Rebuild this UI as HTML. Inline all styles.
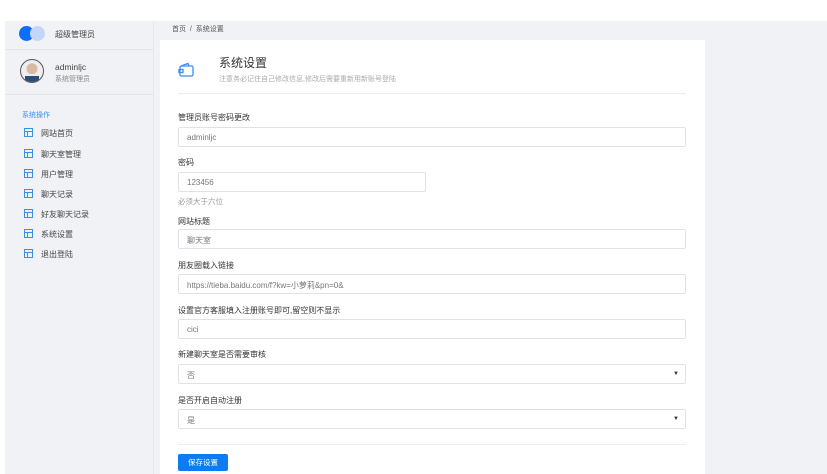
<!DOCTYPE html>
<html><head><meta charset="utf-8"><style>
*{box-sizing:border-box;margin:0;padding:0}
body{width:827px;height:474px;overflow:hidden;background:#fff;font-family:"Liberation Sans","Noto Sans CJK SC",sans-serif;font-size:8px;color:#444;position:relative}
.main{position:absolute;left:5px;top:21px;right:0;bottom:0;background:#f1f2f6}
.side{position:absolute;left:5px;top:21px;width:149px;bottom:0;background:#f1f2f6;border-right:1px solid #e6e8ee}
.abs{position:absolute}
.card{position:absolute;left:160px;top:40px;width:545px;bottom:0;background:#fff}
.lbl{position:absolute;left:178px;font-size:8px;color:#333}
.inp{position:absolute;left:178px;width:508px;height:20px;border:1px solid #dfe2ea;border-radius:2px;font-size:8px;color:#777;padding:5px 8px;background:#fff}
.item{position:absolute;left:24px;font-size:8px;color:#444}
.item i{display:inline-block;width:9px;height:9px;border:1.3px solid #3d8cf0;margin-right:8px;vertical-align:-1px;position:relative}
.item i:before{content:"";position:absolute;left:0;right:0;top:2px;border-top:1.3px solid #3d8cf0}
.item i:after{content:"";position:absolute;left:2px;top:2px;bottom:0;border-left:1.3px solid #3d8cf0}
.arrow{position:absolute;right:6px;top:6px;font-size:6px;color:#333}
</style></head><body>
<div class="main"></div>
<div class="side">
 <div class="abs" style="left:14px;top:5px;width:15px;height:15px;border-radius:50%;background:#0d6efd"></div>
 <div class="abs" style="left:25px;top:5px;width:15px;height:15px;border-radius:50%;background:#c3d6f8"></div>
 <div class="abs" style="left:50px;top:8px;color:#444">超级管理员</div>
 <div class="abs" style="left:0;top:28px;width:149px;border-top:1px solid #e3e5ea"></div>
 <div class="abs" style="left:15px;top:38px;width:24px;height:24px;border-radius:50%;border:1.5px solid #555;background:radial-gradient(circle at 50% 40%,#d9b9a6 0 5px,#eee 6px);overflow:hidden"><div style="position:absolute;bottom:0;left:4px;width:14px;height:6px;background:#2b4d7a"></div></div>
 <div class="abs" style="left:50px;top:41px;font-size:8.5px;color:#444">adminljc</div>
 <div class="abs" style="left:50px;top:53px;font-size:7px;color:#888">系统管理员</div>
 <div class="abs" style="left:0;top:73px;width:149px;border-top:1px solid #e3e5ea"></div>
 <div class="abs" style="left:17px;top:89px;font-size:7px;color:#3d8cf0">系统操作</div>
</div>
<div class="item" style="top:128px"><i></i>网站首页</div>
<div class="item" style="top:149px"><i></i>聊天室管理</div>
<div class="item" style="top:169px"><i></i>用户管理</div>
<div class="item" style="top:189px"><i></i>聊天记录</div>
<div class="item" style="top:209px"><i></i>好友聊天记录</div>
<div class="item" style="top:229px"><i></i>系统设置</div>
<div class="item" style="top:249px"><i></i>退出登陆</div>
<div class="abs" style="left:172px;top:24px;font-size:7px;color:#555">首页 &nbsp;/ &nbsp;系统设置</div>
<div class="card"></div>
<svg class="abs" style="left:178px;top:61px" width="18" height="18" viewBox="0 0 18 18" fill="none" stroke="#3d8cf0" stroke-width="1.3"><rect x="2" y="5" width="13" height="10" rx="1.5"/><path d="M3 5 L10 2.5 L11 5"/><rect x="1" y="8.5" width="4" height="3"/></svg>
<div class="abs" style="left:219px;top:54px;font-size:12px;color:#333">系统设置</div>
<div class="abs" style="left:219px;top:74px;font-size:7px;color:#aaa">注意务必记住自己修改信息,修改后需要重新用新账号登陆</div>
<div class="abs" style="left:178px;top:93px;width:508px;border-top:1px solid #eceef2"></div>
<div class="lbl" style="top:112px">管理员账号密码更改</div>
<div class="inp" style="top:127px">adminljc</div>
<div class="lbl" style="top:157px">密码</div>
<div class="inp" style="top:172px;width:248px">123456</div>
<div class="abs" style="left:178px;top:196px;font-size:7.5px;color:#999">必须大于六位</div>
<div class="lbl" style="top:216px">网站标题</div>
<div class="inp" style="top:229px">聊天室</div>
<div class="lbl" style="top:260px">朋友圈载入链接</div>
<div class="inp" style="top:274px">https://tieba.baidu.com/f?kw=小萝莉&amp;pn=0&amp;</div>
<div class="lbl" style="top:305px">设置官方客服填入注册账号即可,留空则不显示</div>
<div class="inp" style="top:319px">cici</div>
<div class="lbl" style="top:349px">新建聊天室是否需要审核</div>
<div class="inp" style="top:364px">否<span class="arrow">▼</span></div>
<div class="lbl" style="top:395px">是否开启自动注册</div>
<div class="inp" style="top:409px">是<span class="arrow">▼</span></div>
<div class="abs" style="left:178px;top:444px;width:508px;border-top:1px solid #eceef2"></div>
<div class="abs" style="left:178px;top:454px;width:50px;height:17px;background:#0d7cf2;border-radius:2px;color:#fff;font-size:7.5px;text-align:center;line-height:17px">保存设置</div>
</body></html>
